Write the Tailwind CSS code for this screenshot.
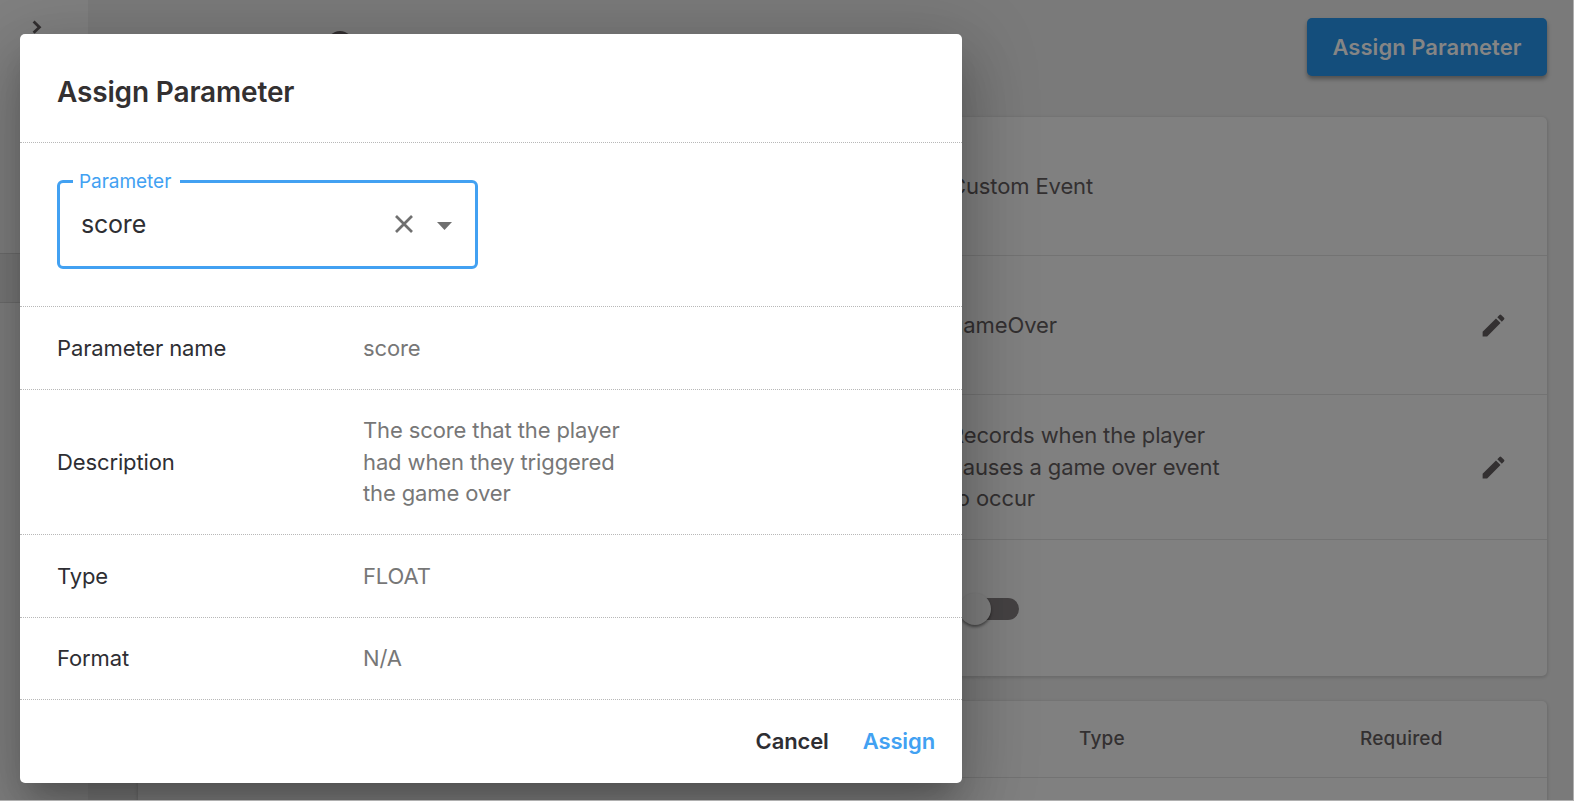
<!DOCTYPE html>
<html lang="en">
<head>
<meta charset="utf-8">
<title>Assign Parameter</title>
<script src="https://cdn.jsdelivr.net/npm/@tailwindcss/browser@4"></script>
</head>
<body class="font-['Inter',sans-serif]">
<div class="relative flex h-[801px] w-[1574px] overflow-hidden border-r border-b border-[#b0b0b0] bg-[#7a7a7a] text-[#333031]">

  <!-- Sidebar -->
  <aside class="flex w-[88px] shrink-0 flex-col bg-[#808080]">
    <div class="h-[253px] pt-[20px] pl-[32px]">
      <svg class="h-[14px] w-[10px]" viewBox="0 0 10 14" fill="none" stroke="#333031" stroke-width="2.8"><path d="M1.6 1.6 7.4 7.2 1.6 12.8"/></svg>
    </div>
    <div class="h-[50px] border-y border-[#6e6e6e] bg-[#797979]"></div>
  </aside>

  <!-- Event page -->
  <main class="flex w-[1459px] shrink-0 flex-col pl-[50px]">
    <header class="flex h-[117px] shrink-0 items-start justify-between pt-[18px]">
      <div class="mt-[13px] ml-[189px] size-[26px] rounded-full bg-[#333031]"></div>
      <div class="flex h-[58px] w-[240px] items-center justify-center rounded-[5px] bg-[#144e7c] text-[22px] font-semibold tracking-[0.04px] text-[#858585] shadow-[0_3px_4px_rgba(0,0,0,0.35)]">Assign Parameter</div>
    </header>

    <section class="flex h-[559px] shrink-0 flex-col rounded-[5px] bg-[#808080] text-[22px] leading-[31.4px] tracking-[-0.12px] shadow-[0_1px_3px_1px_rgba(0,0,0,0.12)]">
      <div class="flex h-[139px] items-center border-b border-[#737373] pt-[2px] pl-[812px]">Custom Event</div>
      <div class="flex h-[139px] items-center justify-between border-b border-[#737373] pr-[39px] pl-[812px]">
        <span class="pt-[2px]">gameOver</span>
        <svg class="size-[29px]" viewBox="0 0 24 24" fill="#333031"><path d="M3 17.25V21h3.75L17.81 9.94l-3.75-3.75L3 17.25zM20.71 7.04a.996.996 0 0 0 0-1.41l-2.34-2.34a.996.996 0 0 0-1.41 0l-1.83 1.83 3.75 3.75 1.83-1.83z"/></svg>
      </div>
      <div class="flex h-[145px] items-center justify-between border-b border-[#737373] pr-[39px] pl-[812px]">
        <span class="pt-px">Records when the player<br>causes a game over event<br>to occur</span>
        <svg class="size-[29px]" viewBox="0 0 24 24" fill="#333031"><path d="M3 17.25V21h3.75L17.81 9.94l-3.75-3.75L3 17.25zM20.71 7.04a.996.996 0 0 0 0-1.41l-2.34-2.34a.996.996 0 0 0-1.41 0l-1.83 1.83 3.75 3.75 1.83-1.83z"/></svg>
      </div>
      <div class="flex flex-1 items-center pt-px pl-[821px]">
        <div class="flex h-[22px] w-[60px] items-center rounded-full bg-[#454243]">
          <div class="size-[32px] shrink-0 rounded-full bg-[#7e7e7e] shadow-[0_2px_3px_rgba(0,0,0,0.45)]"></div>
        </div>
      </div>
    </section>

    <section class="mt-[25px] flex h-[120px] shrink-0 flex-col rounded-t-[5px] bg-[#808080] text-[19px] font-medium tracking-[0.2px] shadow-[0_1px_3px_1px_rgba(0,0,0,0.12)]">
      <div class="flex h-[77px] items-center border-b border-[#737373] pt-px pl-[941px]">
        <span class="w-[281px]">Type</span><span>Required</span>
      </div>
    </section>
  </main>

  <!-- Dialog -->
  <div role="dialog" class="absolute top-[34px] left-[20px] flex h-[749px] w-[942px] flex-col rounded-[5px] bg-white text-[22px] leading-[31.4px] tracking-[-0.12px] text-[#2e2e33] shadow-[0_17px_24px_-11px_rgba(0,0,0,0.2),0_38px_60px_5px_rgba(0,0,0,0.14),0_14px_72px_13px_rgba(0,0,0,0.14)]">
    <h2 class="flex h-[109px] shrink-0 items-center border-b border-dotted border-[#b8b8b8] pt-[10px] pl-[37px] text-[28px] font-semibold tracking-[-0.16px] text-[#333031]">Assign Parameter</h2>
    <div class="h-[164px] shrink-0 border-b border-dotted border-[#b8b8b8] pt-[37px] pl-[37px]">
      <div class="relative flex h-[89px] w-[421px] items-center rounded-[6px] border-[3px] border-[#42a1f2] pr-[23px] pl-[21px]">
        <span class="absolute -top-[14px] left-[13px] bg-white pr-[9px] pl-[6px] text-[19px] leading-[26px] tracking-[-0.04px] text-[#42a1f2]">Parameter</span>
        <span class="flex-1 text-[25px] tracking-[-0.2px]">score</span>
        <svg class="mb-px size-[18px]" viewBox="0 0 18 18" fill="none" stroke="#707070" stroke-width="2.7"><path d="M1 1 17 17M17 1 1 17"/></svg>
        <svg class="mt-[2px] ml-[24px] h-[8px] w-[15px]" viewBox="0 0 15 8" fill="#707070"><path d="M0 0h15L7.5 8z"/></svg>
      </div>
    </div>
    <div class="flex h-[83px] shrink-0 items-center border-b border-dotted border-[#b8b8b8] pt-[2px] pl-[37px]"><span class="w-[306px]">Parameter name</span><span class="text-[#777]">score</span></div>
    <div class="flex h-[145px] shrink-0 items-center border-b border-dotted border-[#b8b8b8] pt-px pl-[37px]"><span class="w-[306px]">Description</span><span class="text-[#777]">The score that the player<br>had when they triggered<br>the game over</span></div>
    <div class="flex h-[83px] shrink-0 items-center border-b border-dotted border-[#b8b8b8] pt-[2px] pl-[37px]"><span class="w-[306px]">Type</span><span class="text-[#777]">FLOAT</span></div>
    <div class="flex h-[82px] shrink-0 items-center border-b border-dotted border-[#b8b8b8] pt-px pl-[37px]"><span class="w-[306px]">Format</span><span class="text-[#777]">N/A</span></div>
    <div class="flex flex-1 items-center justify-end gap-[34px] pr-[27px] font-semibold">
      <span>Cancel</span><span class="text-[#42a1f2]">Assign</span>
    </div>
  </div>
</div>
</body>
</html>
